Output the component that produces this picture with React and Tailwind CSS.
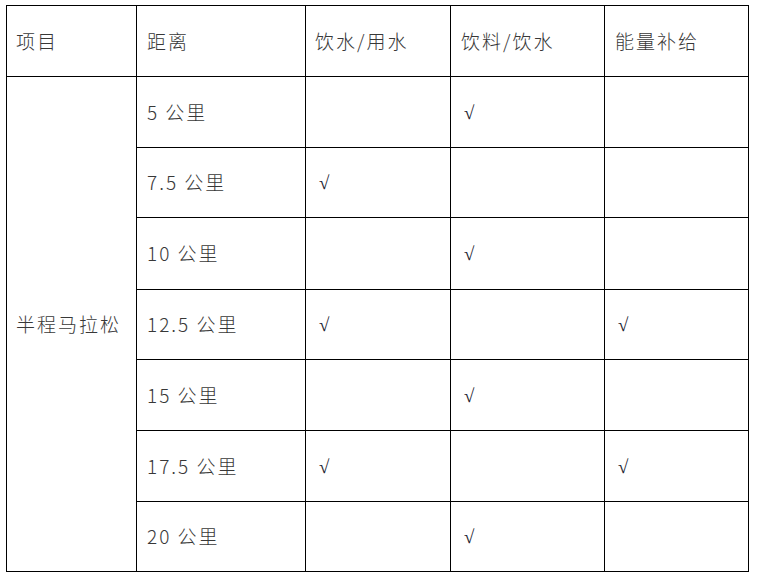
import React from "react";

const rows = [
  { d: "5 公里", c: [false, true, false] },
  { d: "7.5 公里", c: [true, false, false] },
  { d: "10 公里", c: [false, true, false] },
  { d: "12.5 公里", c: [true, false, true] },
  { d: "15 公里", c: [false, true, false] },
  { d: "17.5 公里", c: [true, false, true] },
  { d: "20 公里", c: [false, true, false] },
];

const font = { fontFamily: '"Noto Sans CJK SC", sans-serif' };

function Cell({ children, className = "" }) {
  return (
    <div className={`flex items-center border-r border-b border-black pl-[9px] text-[19px] font-light tracking-[2px] text-[#383838] ${className}`}>
      {children}
    </div>
  );
}

function Check({ on }) {
  return (
    <Cell>
      {on ? (
        <span className="pl-[4px] text-[19px] font-normal leading-none text-[#1a1a2e] [font-family:'Liberation_Serif',serif]">√</span>
      ) : null}
    </Cell>
  );
}

export default function App() {
  return (
    <div className="min-h-[578px] w-[758px] bg-white pt-[5px] pl-[6px]" style={font}>
      <div className="grid w-fit grid-cols-[130px_169px_145px_154px_144px] grid-rows-[71px_71px_70px_72px_70px_71px_71px_70px] border-l border-t border-black">
        <Cell>项目</Cell>
        <Cell className="pl-[10px]">距离</Cell>
        <Cell>饮水/用水</Cell>
        <Cell className="pl-[10px]">饮料/饮水</Cell>
        <Cell className="pl-[10px]">能量补给</Cell>
        <Cell className="row-span-7">半程马拉松</Cell>
        {rows.map((r, i) => (
          <React.Fragment key={i}>
            <Cell className="pl-[10px] tracking-[1px]">{r.d}</Cell>
            {r.c.map((on, j) => (
              <Check key={j} on={on} />
            ))}
          </React.Fragment>
        ))}
      </div>
    </div>
  );
}
